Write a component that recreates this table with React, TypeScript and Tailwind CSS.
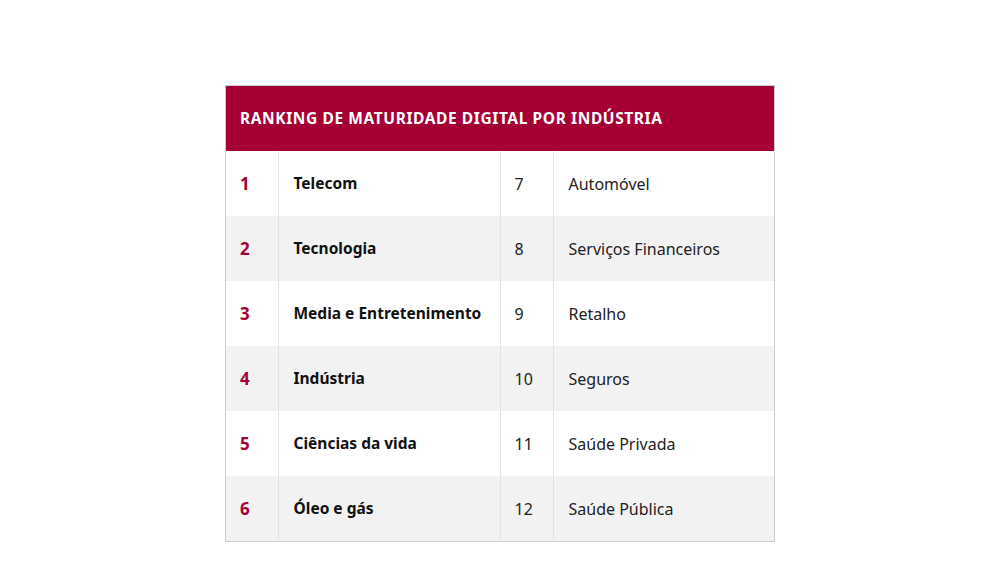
import React from 'react';

const rows = [
  { a: 1, aName: 'Telecom', b: 7, bName: 'Automóvel' },
  { a: 2, aName: 'Tecnologia', b: 8, bName: 'Serviços Financeiros' },
  { a: 3, aName: 'Media e Entretenimento', b: 9, bName: 'Retalho' },
  { a: 4, aName: 'Indústria', b: 10, bName: 'Seguros' },
  { a: 5, aName: 'Ciências da vida', b: 11, bName: 'Saúde Privada' },
  { a: 6, aName: 'Óleo e gás', b: 12, bName: 'Saúde Pública' },
];

export default function App() {
  return (
    <div
      className="w-[1000px] h-[562px] bg-white flex justify-center pt-[85px]"
      style={{ fontFamily: '"Noto Sans", "Open Sans", sans-serif' }}
    >
      <div className="w-[550px] h-fit border border-[#cfcfcf]">
        <div className="h-[65px] bg-[#a50034] flex items-center px-[14px]">
          <h2 className="text-white font-bold text-[15.5px] tracking-[0.6px] uppercase">
            Ranking de maturidade digital por indústria
          </h2>
        </div>
        <table className="w-full border-collapse table-fixed">
          <colgroup>
            <col className="w-[52px]" />
            <col className="w-[222px]" />
            <col className="w-[53px]" />
            <col />
          </colgroup>
          <tbody>
            {rows.map((r, i) => (
              <tr key={r.a} className={i % 2 === 1 ? 'bg-[#f2f2f2]' : 'bg-white'}>
                <td className="h-[65px] pl-[14px] text-[17px] font-bold text-[#a50034]">{r.a}</td>
                <td className="h-[65px] pl-[15px] border-l border-[#e4e4e4] text-[15.5px] font-bold text-[#111]">
                  {r.aName}
                </td>
                <td className="h-[65px] pl-[14px] border-l border-[#e4e4e4] text-[16px] text-[#222]">{r.b}</td>
                <td className="h-[65px] pl-[15px] border-l border-[#e4e4e4] text-[16px] text-[#222]">{r.bName}</td>
              </tr>
            ))}
          </tbody>
        </table>
      </div>
    </div>
  );
}
